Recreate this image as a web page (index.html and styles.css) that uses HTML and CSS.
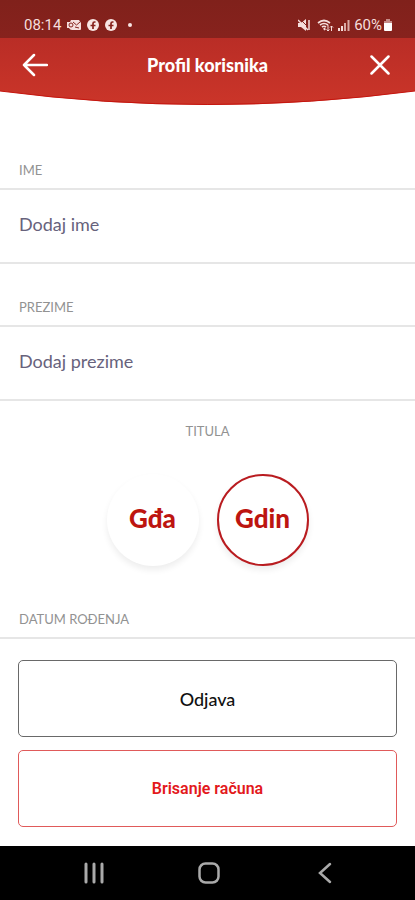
FILE: index.html
```html
<!DOCTYPE html>
<html lang="hr">
<head>
<meta charset="utf-8">
<meta name="viewport" content="width=device-width, initial-scale=1">
<title>Profil korisnika</title>
<link rel="stylesheet" href="styles.css">
</head>
<body>
<div class="screen">
  <div class="top">
    <svg class="top-shape" viewBox="0 0 415 106" preserveAspectRatio="none" aria-hidden="true">
      <defs>
        <linearGradient id="red" x1="0" y1="0" x2="0" y2="1"><stop offset=".36" stop-color="#b92d26"/><stop offset="1" stop-color="#cb3529"/></linearGradient>
        <linearGradient id="dark" x1="0" y1="0" x2="0" y2="1"><stop offset="0" stop-color="#80211b"/><stop offset="1" stop-color="#87221d"/></linearGradient>
      </defs>
      <path d="M0 0H415V91Q207.500 119 0 91Z" fill="url(#red)"/>
      <path d="M0 91Q207.500 118 415 91" fill="none" stroke="#c5150e" stroke-width="1"/>
      <path d="M0 0H415V38H0Z" fill="url(#dark)"/>
    </svg>
    <div class="status">
      <div class="status-group">
        <span>08:14</span>
        <svg width="14" height="12" viewBox="0 0 14 12" aria-hidden="true"><path d="M4 1H12L14 4V10Q14 11 13 11H5Q3 11 2 9H0V3H3Z" fill="#f5dedc"/><circle cx="4" cy="6" r="2" fill="none" stroke="#87221d"/><path d="M6 3L9.500 6L13 3M8 8L12 9" fill="none" stroke="#87221d"/></svg>
        <svg width="12" height="12" viewBox="0 0 12 12" aria-hidden="true"><circle cx="6" cy="6" r="6" fill="#f8e6e4"/><path d="M8.500 3H7.500Q6 3 6 4.500V10M3.500 6.500H8.500" fill="none" stroke="#87221d" stroke-width="1.700"/></svg>
        <svg class="spaced" width="12" height="12" viewBox="0 0 12 12" aria-hidden="true"><circle cx="6" cy="6" r="6" fill="#f8e6e4"/><path d="M8.500 3H7.500Q6 3 6 4.500V10M3.500 6.500H8.500" fill="none" stroke="#87221d" stroke-width="1.700"/></svg>
        <svg width="4" height="4" viewBox="0 0 4 4" aria-hidden="true"><circle cx="2" cy="2" r="2" fill="#f8e6e4"/></svg>
      </div>
      <div class="status-group status-right">
        <svg width="12" height="12" viewBox="0 0 12 12" aria-hidden="true"><path d="M0 4H3L8 0V12L3 8H0Z" fill="#f5dedc"/><path d="M2 0L12 10" stroke="#87221d" stroke-width="1"/><path d="M0 1L10 11" stroke="#f5dedc" stroke-width="1.500"/><path d="M11 1V11" stroke="#f5dedc" stroke-width="1.500"/></svg>
        <svg class="wifi" width="17" height="13" viewBox="0 0 17 13" fill="none" stroke="#f5dedc" aria-hidden="true"><path d="M1 4Q7 -1 13 4M3 6Q7 3 11 6M5 8Q7 6.500 9 8" stroke-width="1.700"/><path d="M7 9L8 11" stroke-width="2"/><path d="M11 6V12M9.500 10.500L11 12L12.500 10.500M14.500 12V7M13 8.500L14.500 7L16 8.500" stroke-width="1"/></svg>
        <svg width="12" height="12" viewBox="0 0 12 12" aria-hidden="true"><path d="M0 9H2V12H0ZM3 7H5V12H3Z" fill="#f5dedc"/><path d="M6 4H8V12H6ZM9.500 1H11.500V12H9.500Z" fill="#d9aaa6"/></svg>
        <span class="battery">60%<svg width="8" height="12" viewBox="0 0 8 12" aria-hidden="true"><path d="M2 0H6V2H8V5H0V2H2Z" fill="#c58b87"/><path d="M0 4H8V11Q8 12 7 12H1Q0 12 0 11Z" fill="#fff"/></svg></span>
      </div>
    </div>
    <header class="bar">
      <button class="icon-button" type="button" aria-label="Natrag"><svg width="26" height="24" viewBox="0 0 26 24"><path d="M25 12H2M12 2L2 12L12 22" fill="none" stroke="#fff" stroke-width="2.500" stroke-linecap="round" stroke-linejoin="round"/></svg></button>
      <h1>Profil korisnika</h1>
      <button class="icon-button" type="button" aria-label="Zatvori"><svg width="20" height="20" viewBox="0 0 20 20"><path d="M1.500 1.500L18.500 18.500M18.500 1.500L1.500 18.500" stroke="#fff" stroke-width="2.500" stroke-linecap="round"/></svg></button>
    </header>
  </div>
  <main>
    <div class="field first">
      <label for="ime">IME</label>
      <input id="ime" type="text" placeholder="Dodaj ime">
    </div>
    <div class="field">
      <label for="prezime">PREZIME</label>
      <input id="prezime" type="text" placeholder="Dodaj prezime">
    </div>
    <section class="titles" aria-labelledby="titula">
      <h2 id="titula">TITULA</h2>
      <div class="choices">
        <button class="choice" type="button" aria-pressed="false">Gđa</button>
        <button class="choice selected" type="button" aria-pressed="true">Gdin</button>
      </div>
    </section>
    <h2 class="birth">DATUM ROĐENJA</h2>
    <div class="actions">
      <button class="action" type="button">Odjava</button>
      <button class="action danger" type="button">Brisanje računa</button>
    </div>
  </main>
  <nav class="system" aria-label="Navigacija">
    <button type="button" aria-label="Nedavno"><svg width="22" height="22" viewBox="0 0 22 22"><path d="M3 2V20M11 2V20M19 2V20" stroke="#aaa" stroke-width="3" stroke-linecap="round"/></svg></button>
    <button type="button" aria-label="Početna"><svg width="22" height="22" viewBox="0 0 22 22"><rect x="1.500" y="1.500" width="19" height="19" rx="6" fill="none" stroke="#aaa" stroke-width="2.500"/></svg></button>
    <button type="button" aria-label="Povratak"><svg width="22" height="22" viewBox="0 0 22 22"><path d="M16 2L6 11L16 20" fill="none" stroke="#aaa" stroke-width="2.500" stroke-linecap="round"/></svg></button>
  </nav>
</div>
</body>
</html>
```
FILE: styles.css
```css
* { box-sizing: border-box; }
body {
  margin: 0;
  background: #fff;
  font-family: Lato, "Noto Sans", sans-serif;
}
button {
  padding: 0;
  border: 0;
  background: none;
  font-family: inherit;
}
svg { display: block; }
h1, h2 { margin: 0; }

.screen {
  min-height: 100vh;
  display: flex;
  flex-direction: column;
}
main { flex: 1; }

.top {
  position: relative;
  height: 106px;
}
.top-shape {
  position: absolute;
  inset: 0;
  width: 100%;
  height: 100%;
}
.status {
  position: relative;
  height: 38px;
  padding: 12px 23px 0 24px;
  display: flex;
  justify-content: space-between;
  align-items: center;
  color: #f5dedc;
  font: 15px/24px Roboto, sans-serif;
}
.status-group {
  display: flex;
  align-items: center;
  gap: 6px;
}
.spaced { margin-right: 5px; }
.status-right { gap: 4px; }
.wifi { margin-left: 3px; }
.battery {
  display: flex;
  align-items: center;
  gap: 2px;
}
.bar {
  position: relative;
  height: 54px;
  padding: 0 22px;
  display: grid;
  grid-template-columns: 26px 1fr 26px;
  align-items: center;
}
.bar h1 {
  color: #fff;
  font-size: 18px;
  line-height: 24px;
  font-weight: 900;
  text-align: center;
}
.icon-button {
  display: flex;
  justify-content: center;
}

.field label, h2 {
  display: block;
  color: #929292;
  font-size: 13px;
  line-height: 16px;
  font-weight: 400;
}
.field {
  padding-top: 35px;
  border-bottom: 2px solid #e6e6e6;
}
.field.first { padding-top: 56px; }
.field label, .birth {
  padding: 0 19px 10px;
  border-bottom: 2px solid #e6e6e6;
}
.field input {
  display: block;
  width: 100%;
  height: 72px;
  padding: 0 19px 4px;
  border: 0;
  background: none;
  color: #55506f;
  font: 18px/24px Lato, "Noto Sans", sans-serif;
}
.field input::placeholder {
  color: #67627c;
  opacity: 1;
}

.titles {
  padding-top: 22px;
  text-align: center;
}
.choices {
  display: flex;
  justify-content: center;
  gap: 18px;
  padding: 35px 0 45px;
}
.choice {
  width: 92px;
  height: 92px;
  border-radius: 50%;
  background: #fff;
  box-shadow: 0 4px 6px rgba(0, 0, 0, .07);
  color: #bd1510;
  font-size: 26px;
  line-height: 32px;
  font-weight: 900;
  padding-bottom: 4px;
}
.choice.selected { border: 2px solid #b91c20; }

.actions {
  padding: 21px 18px 19px;
  display: grid;
  gap: 13px;
}
.action {
  height: 77px;
  border: 1px solid #696969;
  border-radius: 5px;
  color: #111;
  font-size: 18px;
  line-height: 24px;
  font-weight: 500;
}
.action.danger {
  border-color: #e05a5a;
  color: #e3191c;
  font-family: Roboto, sans-serif;
  font-size: 16px;
  font-weight: 600;
}

.system {
  height: 54px;
  padding: 0 32px 0 36px;
  display: grid;
  grid-template-columns: repeat(3, 1fr);
  place-items: center;
  background: #000;
}
```
